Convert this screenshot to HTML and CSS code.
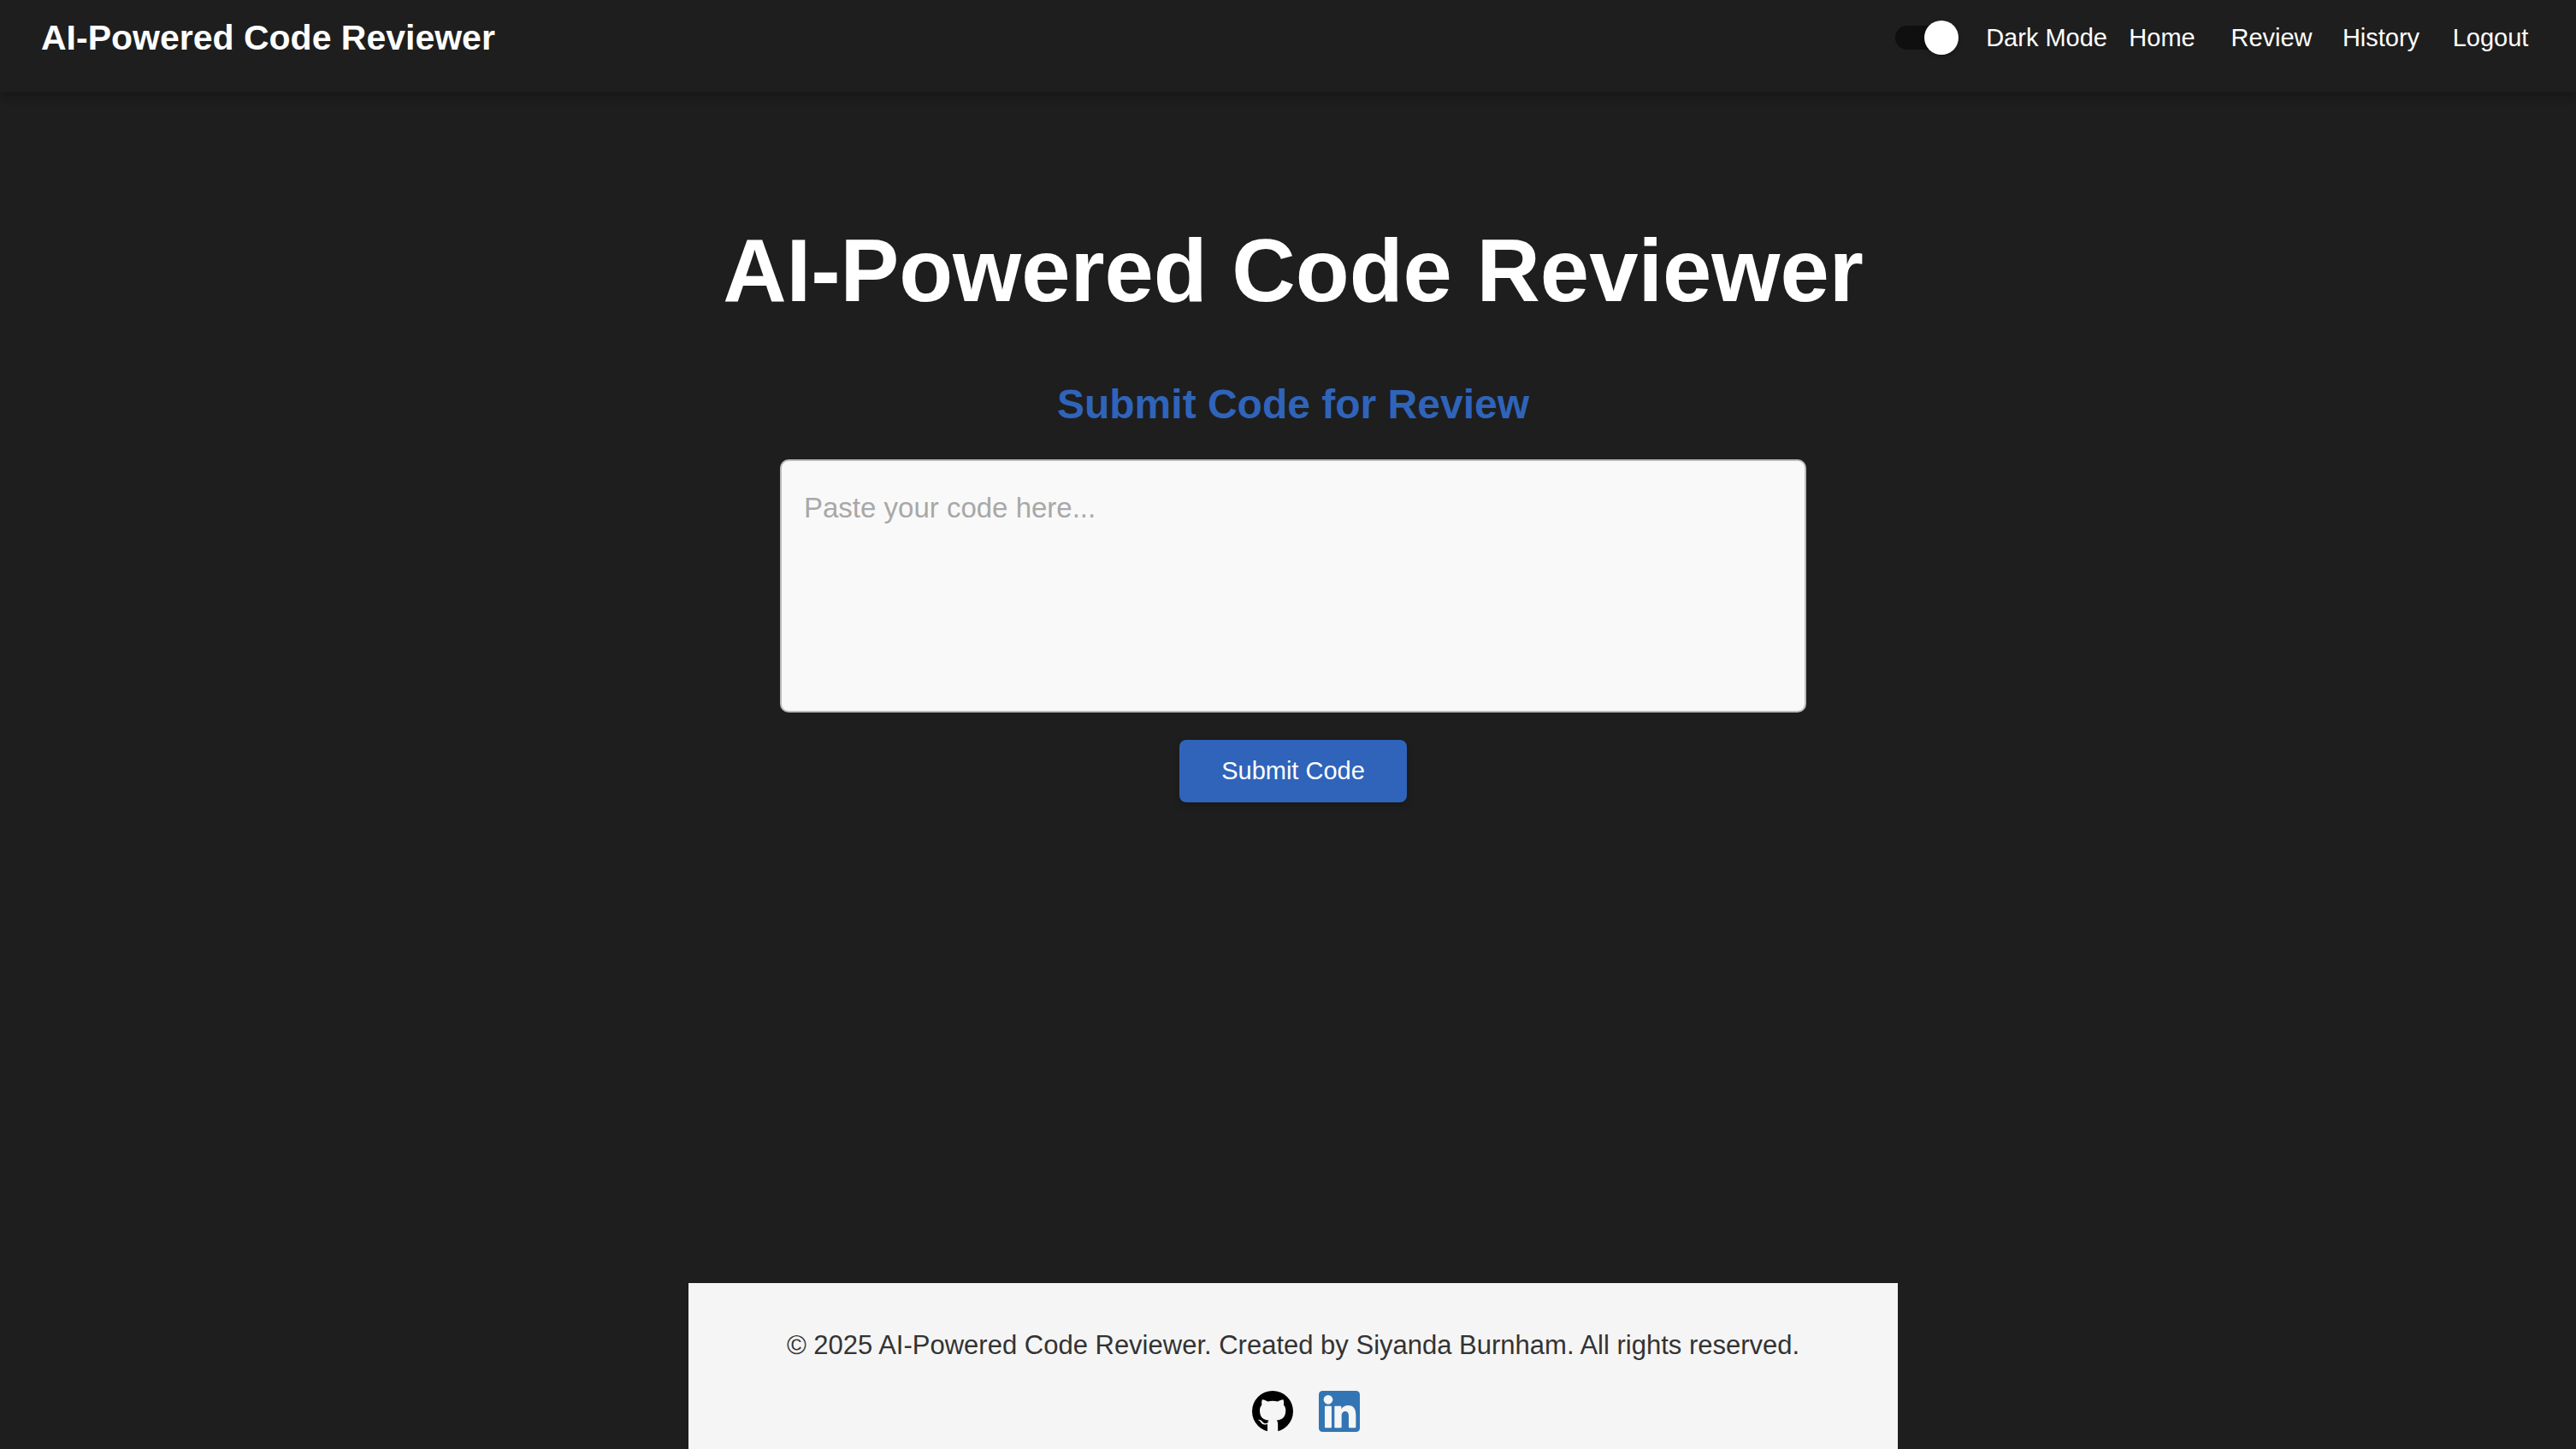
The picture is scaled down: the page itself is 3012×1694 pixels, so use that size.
FILE: index.html
```html
<!DOCTYPE html>
<html lang="en">
<head>
  <meta charset="utf-8">
  <meta name="viewport" content="width=device-width, initial-scale=1">
  <title>AI-Powered Code Reviewer</title>
  <link rel="stylesheet" href="styles.css">
</head>
<body>
  <header class="app-bar">
    <div class="brand">AI-Powered Code Reviewer</div>
    <div class="toolbar">
      <label class="mode">
        <input class="switch" type="checkbox" role="switch" checked>
        <span>Dark Mode</span>
      </label>
      <nav class="nav">
        <a class="nav-link" href="#home">Home</a>
        <a class="nav-link" href="#review">Review</a>
        <a class="nav-link" href="#history">History</a>
        <a class="nav-link" href="#logout">Logout</a>
      </nav>
    </div>
  </header>

  <div class="page">
    <main class="content">
      <h1 class="title">AI-Powered Code Reviewer</h1>
      <form class="review-form">
        <h2 class="subtitle"><label for="code">Submit Code for Review</label></h2>
        <textarea class="code-input" id="code" placeholder="Paste your code here..."></textarea>
        <button class="submit" type="submit">Submit Code</button>
      </form>
    </main>

    <footer class="footer">
      <p class="copyright">© 2025 AI-Powered Code Reviewer. Created by Siyanda Burnham. All rights reserved.</p>
      <div class="social">
        <a class="social-link" href="#github" aria-label="GitHub">
          <svg class="social-icon" viewBox="0 0 48 48" aria-hidden="true">
            <circle cx="24" cy="24" r="24"/>
            <path fill="#f5f5f5" d="M18 49V39c-4 1-6.500 0-8-2.500-1-1.500-1.500-2-3-2.500 2.500-.6 4 .6 5.200 2.200C13.500 38 15.500 38.500 18.200 37.500c.2-1.200.7-2.200 1.400-2.900C13 33.800 9 31 9 22.800c0-2.600.9-4.700 2.400-6.400-.3-1.500-.5-3.800.4-6.200 2.200-.1 4.500 1 6.500 2.300a23 23 0 0 1 11.700 0c2-1.300 4.300-2.400 6.500-2.300.9 2.400.7 4.700.4 6.200 1.500 1.700 2.400 3.800 2.400 6.400 0 8.200-4.300 11-10.700 11.800 1 .9 1.600 2.500 1.600 4.500V49z"/>
            <path d="M18 41.200v4.600c-3-.8-5-3.300-7.200-6.300 2 1.700 4.400 2.200 7.200 1.700z"/>
          </svg>
        </a>
        <a class="social-link" href="#linkedin" aria-label="LinkedIn">
          <svg class="social-icon" viewBox="0 0 144 144" aria-hidden="true">
            <rect width="144" height="144" rx="13" fill="#3375b4"/>
            <g fill="#f5f5f5">
              <circle cx="33" cy="31" r="16"/>
              <rect x="21" y="53" width="24" height="77" rx="3"/>
              <path d="M58 53h18q3 0 3 3v8c5-8 13-13 24-13 20 0 27 14 27 34v42q0 3-3 3h-19q-3 0-3-3V89c0-10-3-17-12-17-10 0-13 8-13 17v38q0 3-3 3H58q-3 0-3-3V56q0-3 3-3z"/>
            </g>
          </svg>
        </a>
      </div>
    </footer>
  </div>
</body>
</html>
```
FILE: styles.css
```css
* {
  box-sizing: border-box;
}

body {
  display: flex;
  flex-direction: column;
  min-height: 100vh;
  margin: 0;
  background: #1e1e1e;
  color: #fff;
  font-family: "Liberation Sans", Arial, Helvetica, sans-serif;
  font-size: 29px;
}

/* Header */

.app-bar {
  display: flex;
  align-items: center;
  justify-content: space-between;
  padding: 0 36px 20px 48px;
  box-shadow:
    0 6px 8px -2px rgba(0, 0, 0, 0.16),
    0 4px 12px rgba(0, 0, 0, 0.14);
}

.brand {
  font-size: 41px;
  font-weight: 700;
  line-height: 88px;
}

.toolbar,
.mode,
.nav {
  display: flex;
  align-items: center;
}

.mode {
  gap: 38px;
  line-height: 88px;
}

.switch {
  appearance: none;
  position: relative;
  width: 68px;
  height: 28px;
  margin: 0;
  border-radius: 14px;
  background: #0f0f0f;
}

.switch::before {
  content: "";
  position: absolute;
  top: -6px;
  left: 0;
  width: 40px;
  height: 40px;
  border-radius: 50%;
  background: #fff;
  box-shadow: 0 2px 4px rgba(0, 0, 0, 0.3);
}

.switch:checked::before {
  left: 34px;
}

.nav-link {
  width: 128px;
  color: #fff;
  line-height: 88px;
  text-align: center;
  text-decoration: none;
}

/* Review form */

.page {
  display: flex;
  flex: 1;
  flex-direction: column;
  align-items: center;
  justify-content: space-between;
  padding-left: 12px;
}

.content,
.review-form {
  display: flex;
  flex-direction: column;
  align-items: center;
  width: 100%;
}

.content {
  padding: 144px 0 64px;
}

.title {
  margin: 0;
  font-size: 103px;
  line-height: 129px;
  text-align: center;
}

.review-form {
  max-width: 1200px;
  padding-top: 60px;
}

.subtitle {
  margin: 0;
  color: #2f64ba;
  font-size: 48px;
  line-height: 64px;
}

.code-input {
  display: block;
  width: 100%;
  height: 296px;
  margin: 32px 0;
  padding: 36px 26px;
  border: 2px solid #bbb;
  border-radius: 10px;
  background: #f9f9f9;
  color: #333;
  font: inherit;
  font-size: 33px;
  resize: none;
}

.code-input::placeholder {
  color: #a8a8a8;
}

.submit {
  padding: 12px 49px;
  border: 0;
  border-radius: 8px;
  background: #2f64ba;
  box-shadow: 0 4px 8px rgba(0, 0, 0, 0.2);
  color: #fff;
  font: inherit;
  line-height: 49px;
}

/* Footer */

.footer {
  width: 100%;
  max-width: 1414px;
  padding: 48px 32px 20px;
  background: #f5f5f5;
  color: #333;
  text-align: center;
}

.copyright {
  margin: 0 0 28px;
  font-size: 31px;
  line-height: 50px;
}

.social {
  display: flex;
  justify-content: center;
  gap: 30px;
  padding-left: 30px;
}

.social-link,
.social-icon {
  display: block;
  width: 48px;
  height: 48px;
}
```
